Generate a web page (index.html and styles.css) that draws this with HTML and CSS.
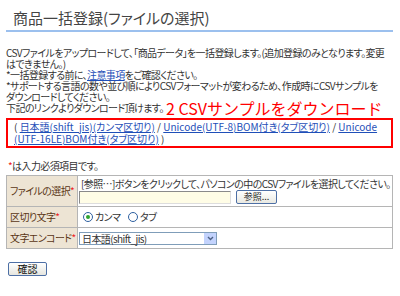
FILE: index.html
```html
<!DOCTYPE html>
<html lang="ja">
  <head>
    <meta charset="UTF-8" />
    <title>商品一括登録</title>
    <link rel="stylesheet" href="styles.css">
  </head>
  <body>
    <div id="page">
      <h1 class="page-title">商品一括登録(ファイルの選択)</h1>

      <div class="intro">
        <p>CSVファイルをアップロードして、「商品データ」を一括登録します。(追加登録のみとなります。変更<br />はできません。)</p>
        <p>*一括登録する前に、<a href="#">注意事項</a>をご確認ください。</p>
        <p>*サポートする言語の数や並び順によりCSVフォーマットが変わるため、作成時にCSVサンプルを<br />ダウンロードしてください。</p>
        <p>下記のリンクよりダウンロード頂けます。</p>
        <span class="note">2 CSVサンプルをダウンロード</span>
      </div>

      <div class="sample-links">
        ( <a href="#">日本語(shift_jis)(カンマ区切り)</a> / <a href="#">Unicode(UTF-8)BOM付き(タブ区切り)</a> / <a href="#">Unicode<br />(UTF-16LE)BOM付き(タブ区切り)</a> )
      </div>

      <p class="required-note"><span class="req">*</span>は入力必須項目です。</p>

      <table class="form-table">
        <tr class="row-file">
          <th>ファイルの選択<span class="req">*</span></th>
          <td>
            <div class="hint">[参照…]ボタンをクリックして、パソコンの中のCSVファイルを選択してください。</div>
            <div class="file-field">
              <input type="text" class="file-path" />
              <button type="button" class="browse">参照...</button>
            </div>
          </td>
        </tr>
        <tr>
          <th>区切り文字<span class="req">*</span></th>
          <td>
            <label class="radio checked"><span class="dot"></span>カンマ</label>
            <label class="radio"><span class="dot"></span>タブ</label>
          </td>
        </tr>
        <tr>
          <th>文字エンコード<span class="req">*</span></th>
          <td>
            <div class="select">
              <span class="select-value">日本語(shift_jis)</span>
              <span class="select-arrow">
                <svg width="7" height="5" viewBox="0 0 7 5"><path d="M1 1 L3.5 3.5 L6 1" fill="none" stroke="#4d6185" stroke-width="1.4"/></svg>
              </span>
            </div>
          </td>
        </tr>
      </table>

      <button type="button" class="confirm">確認</button>
    </div>
  </body>
</html>
```

FILE: styles.css
```css
body {
  margin: 0;
  font-family: "Noto Sans CJK JP", "Liberation Sans", sans-serif;
  font-feature-settings: "palt";
  font-size: 10px;
  letter-spacing: -0.6px;
  color: #333;
  background-color: #fff;
}

#page {
  width: 387px;
  padding: 0 6px;
}

.page-title {
  margin: 0;
  padding: 9px 0 3px 7px;
  font-size: 15px;
  font-weight: normal;
  letter-spacing: 0;
  color: #444;
  border-bottom: 2px solid #9cc0ee;
  line-height: 18px;
}

.intro {
  position: relative;
  margin-top: 15px;
}

.intro p {
  margin: 0;
  line-height: 11px;
  white-space: nowrap;
}

a {
  color: #1f4fb8;
  text-decoration: underline;
}

.note {
  position: absolute;
  left: 158px;
  top: 52px;
  font-size: 16px;
  font-feature-settings: normal;
  letter-spacing: 0;
  line-height: 18px;
  color: #f00;
  background-color: #fff;
  padding: 0 2px;
}

.sample-links {
  margin-top: 5px;
  padding: 1px 6px;
  border: 2px solid #f00;
  line-height: 12px;
  letter-spacing: 0;
  white-space: nowrap;
}

.required-note {
  margin: 12px 0 3px 2px;
  line-height: 12px;
}

.req {
  color: #e22;
}

.form-table {
  width: 387px;
  border-collapse: collapse;
  border: 1px solid #a8a8a8;
}

.form-table th,
.form-table td {
  border: 1px solid #b5b5b5;
  padding: 2px 1px;
  line-height: 12px;
}

.form-table th {
  width: 66px;
  padding-left: 3px;
  text-align: left;
  font-weight: normal;
  color: #5a3616;
  background-color: #ede4d4;
  white-space: nowrap;
  height: 16px;
}

.form-table td {
  background-color: #fff;
}

.hint {
  padding-left: 2px;
  white-space: nowrap;
}

.file-field {
  display: flex;
  align-items: center;
  gap: 5px;
}

.file-path {
  width: 152px;
  height: 13px;
  box-sizing: border-box;
  border: 1px solid #8a8a8a;
  border-right-color: #ddd;
  border-bottom-color: #ddd;
  background-color: #fffde6;
  margin: 0;
}

.browse {
  height: 14px;
  width: 41px;
  padding: 0;
  font-family: inherit;
  font-size: 9px;
  line-height: 10px;
  color: #222;
  border: 1px solid #4d6fa5;
  border-radius: 2px;
  background: linear-gradient(#fff, #e9e9e2);
}

.radio {
  display: inline-flex;
  align-items: center;
  gap: 2px;
  margin-left: 4px;
  margin-right: 2px;
}

.dot {
  width: 8px;
  height: 8px;
  border: 1px solid #2d5fa0;
  border-radius: 50%;
  background-color: #fff;
  position: relative;
}

.radio.checked .dot::after {
  content: "";
  position: absolute;
  left: 2px;
  top: 2px;
  width: 4px;
  height: 4px;
  border-radius: 50%;
  background-color: #2fa52f;
}

.select {
  display: flex;
  width: 138px;
  height: 13px;
  border: 1px solid #7f9db9;
  box-sizing: border-box;
  align-items: center;
}

.select-value {
  flex: 1;
  padding-left: 2px;
  line-height: 11px;
}

.select-arrow {
  width: 12px;
  height: 11px;
  display: flex;
  align-items: center;
  justify-content: center;
  background-color: #c3d3fd;
}

.confirm {
  margin: 13px 0 0 2px;
  width: 39px;
  height: 14px;
  padding: 0;
  font-family: inherit;
  font-size: 10px;
  line-height: 10px;
  color: #111;
  border: 1px solid #4d6fa5;
  border-radius: 2px;
  background: linear-gradient(#fff, #e6e6df);
}
```
